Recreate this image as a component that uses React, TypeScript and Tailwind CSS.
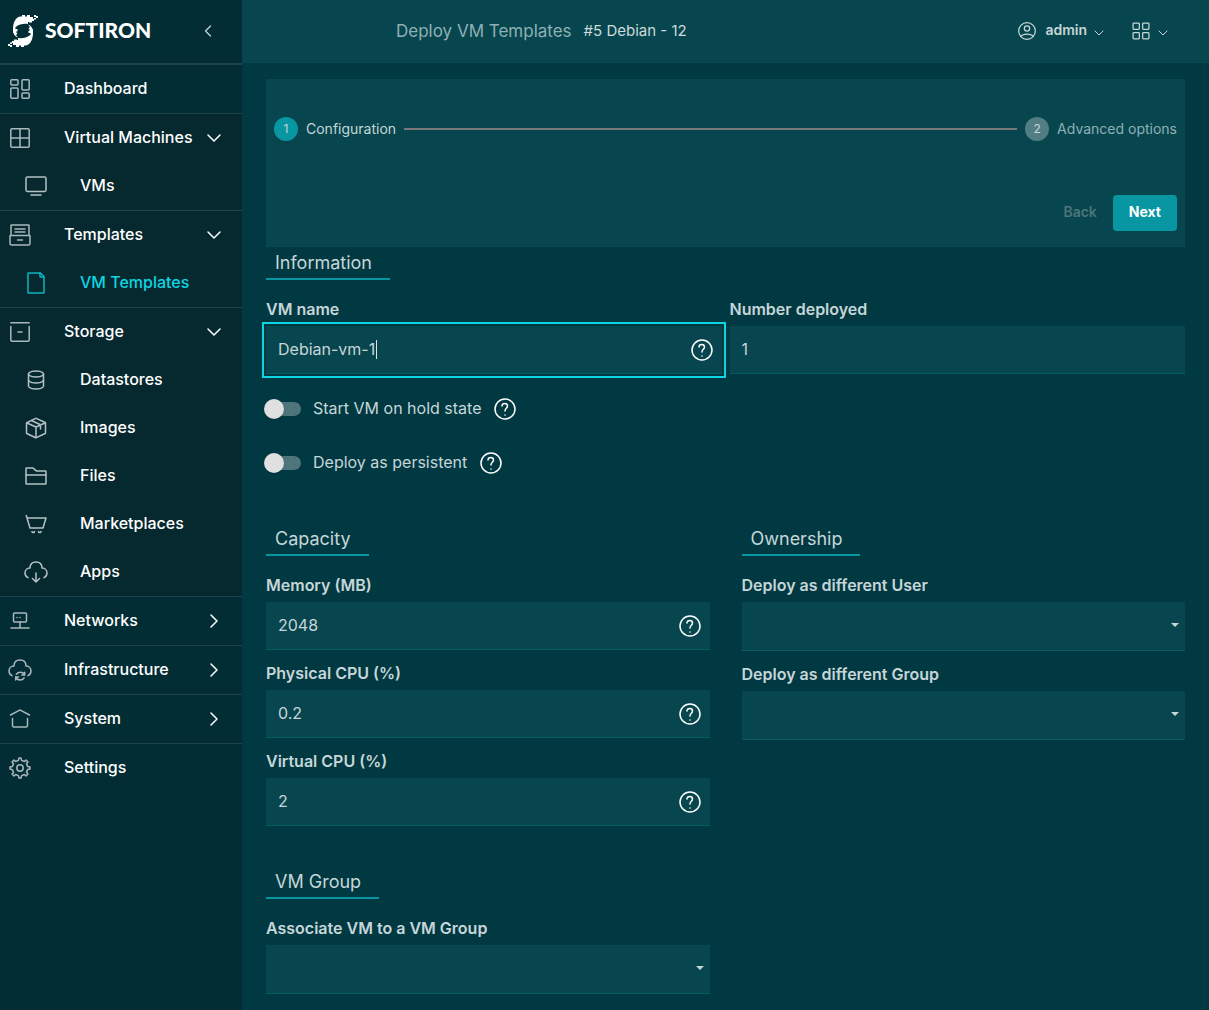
import clsx from "clsx"
import { useState, type ReactNode } from "react"

type IconName = keyof typeof iconPaths

const iconPaths = {
  dashboard: (
    <>
      <rect x="2.8" y="2.8" width="7.2" height="5.2" rx="1" />
      <rect x="2.8" y="11" width="7.2" height="10.2" rx="1" />
      <rect x="14" y="2.8" width="7.2" height="10.2" rx="1" />
      <rect x="14" y="16" width="7.2" height="5.2" rx="1" />
    </>
  ),
  vmGrid: (
    <>
      <rect x="2.8" y="2.8" width="18.4" height="18.4" rx="1" />
      <path d="M12 3V21M3 12H21" />
    </>
  ),
  monitor: (
    <>
      <rect x="2" y="3" width="20" height="14.5" rx="1.4" />
      <path d="M7 21H17" />
    </>
  ),
  archive: (
    <>
      <path d="M7 6H17M7 9H17M9.5 17H14.5" />
      <path d="M3 12.5V2.6C3 2.27 3.27 2 3.6 2H20.4C20.73 2 21 2.27 21 2.6V12.5" />
      <path d="M2.6 12.5H21.4C21.7 12.5 22 12.8 22 13.1V20.4C22 21.3 21.3 22 20.4 22H3.6C2.7 22 2 21.3 2 20.4V13.1C2 12.8 2.3 12.5 2.6 12.5Z" />
    </>
  ),
  page: (
    <>
      <path d="M4 21.4V2.6C4 2.27 4.27 2 4.6 2H16.25C16.4 2 16.56 2.06 16.67 2.18L19.82 5.33C19.94 5.44 20 5.6 20 5.75V21.4C20 21.73 19.73 22 19.4 22H4.6C4.27 22 4 21.73 4 21.4Z" />
      <path d="M16 2V5.4C16 5.73 16.27 6 16.6 6H20" />
    </>
  ),
  box: (
    <>
      <path d="M2.8 6.5V20C2.8 20.7 3.3 21.2 4 21.2H20C20.7 21.2 21.2 20.7 21.2 20V6.5" />
      <path d="M2.8 2.8H21.2M10 12H14" />
    </>
  ),
  database: (
    <>
      <path d="M4.5 6V12C4.5 12 4.5 15 12 15C19.5 15 19.5 12 19.5 12V6" />
      <path d="M12 3C19.5 3 19.5 6 19.5 6C19.5 6 19.5 9 12 9C4.5 9 4.5 6 4.5 6C4.5 6 4.5 3 12 3Z" />
      <path d="M4.5 12V18C4.5 18 4.5 21 12 21C19.5 21 19.5 18 19.5 18V12" />
    </>
  ),
  cube: (
    <>
      <path d="M2.7 6.74C2.57 6.8 2.5 6.93 2.5 7.07V17C2.5 17.2 2.6 17.36 2.8 17.45L11.7 21.7C11.9 21.8 12.1 21.8 12.3 21.7L21.2 17.45C21.4 17.36 21.5 17.2 21.5 17V7C21.5 6.8 21.4 6.6 21.2 6.5L12.3 2.4C12.1 2.3 11.9 2.3 11.7 2.4Z" />
      <path d="M3 7L12 11L21 7M12 11V21.5M7.5 4.5L16.5 8.8V13" />
    </>
  ),
  folder: (
    <>
      <path d="M2 11V4.6C2 4.27 2.27 4 2.6 4H8.78C8.92 4 9.06 4.05 9.17 4.14L12.33 6.86C12.44 6.95 12.58 7 12.72 7H21.4C21.73 7 22 7.27 22 7.6V11" />
      <path d="M2 11H22V19.4C22 19.73 21.73 20 21.4 20H2.6C2.27 20 2 19.73 2 19.4V11Z" />
    </>
  ),
  cart: (
    <>
      <path d="M3 6H22L19 16H6L3 6ZM3 6L2.25 3.5" />
      <path d="M10.5 19.5C10.5 20.1 9.9 20.6 9.3 20.6C8.6 20.6 8 20.1 8 19.5M17 19.5C17 20.1 16.4 20.6 15.8 20.6C15.1 20.6 14.5 20.1 14.5 19.5" />
    </>
  ),
  cloudDown: (
    <>
      <path d="M12 13V22M12 22L15.5 18.5M12 22L8.5 18.5" />
      <path d="M20 17.6C21.5 17 23 15.7 23 13C23 9 19.7 8 18 8C18 6 18 2 12 2C6 2 6 6 6 8C4.3 8 1 9 1 13C1 15.7 2.5 17 4 17.6" />
    </>
  ),
  network: (
    <>
      <rect x="5.5" y="4" width="13" height="9" rx="1" />
      <path d="M3 19H21M12 13V19" />
      <path d="M9 8.5H9.1M12 8.5H12.1" />
    </>
  ),
  cloudSync: (
    <>
      <path d="M20 17.6C21.5 17 23 15.7 23 13C23 9 19.7 8 18 8C18 6 18 2 12 2C6 2 6 6 6 8C4.3 8 1 9 1 13C1 15.7 2.5 17 4 17.6" />
      <path d="M16.5 17C15.9 15.2 14.2 14.2 12.3 14.2C10.6 14.2 9.1 15 8.3 16.3M16.7 14.2V17.1H13.8" />
      <path d="M7.8 18.8C8.3 20.7 10 22 12.1 22C13.8 22 15.3 21.2 16.1 19.8M10.6 19H7.7V21.9" />
    </>
  ),
  home: (
    <>
      <path d="M2.5 8L11.7 3.2C11.9 3.1 12.1 3.1 12.3 3.2L21.5 8" />
      <path d="M19.5 11.5V18.5C19.5 19.6 18.9 20 18 20H6C5.1 20 4.500 19.6 4.500 18.5V11.5" />
    </>
  ),
  cog: (
    <>
      <circle cx="12" cy="12" r="3.2" />
      <path d="M19.62 10.4L18.47 7.62L20 6L18 4L16.39 5.53L13.56 4.37L12.93 2H10.98L10.34 4.4L7.57 5.56L6 4L4 6L5.52 7.64L4.38 10.43L2 11V13L4.4 13.66L5.56 16.43L4 18L6 20L7.65 18.47L10.39 19.6L11 22H13L13.61 19.6L16.37 18.46L18 20L20 18L18.46 16.36L19.6 13.6L22 12.97V11Z" />
    </>
  ),
  user: (
    <>
      <circle cx="12" cy="12" r="10" />
      <circle cx="12" cy="9" r="3.2" />
      <path d="M4.3 18.4C4.3 18.4 6.5 15.6 12 15.6C17.5 15.6 19.7 18.4 19.7 18.4" />
    </>
  ),
  grid: (
    <>
      <rect x="2.5" y="2.5" width="7.5" height="7.5" rx="1" />
      <rect x="14" y="2.5" width="7.5" height="7.5" rx="1" />
      <rect x="2.5" y="14" width="7.5" height="7.5" rx="1" />
      <rect x="14" y="14" width="7.5" height="7.5" rx="1" />
    </>
  ),
  help: (
    <>
      <circle cx="12" cy="12" r="10" />
      <path d="M9 9C9 5.5 14.5 5.5 14.5 9C14.5 11.5 12 11 12 14M12 18.01L12.01 18" />
    </>
  ),
  down: <path d="M6 9L12 15L18 9" />,
  right: <path d="M9 6L15 12L9 18" />,
  left: <path d="M15 6L9 12L15 18" />,
} satisfies Record<string, ReactNode>

function Icon({ name, className = "size-6" }: { name: IconName; className?: string }) {
  return (
    <svg
      viewBox="0 0 24 24"
      fill="none"
      stroke="currentColor"
      strokeWidth="1.5"
      strokeLinecap="round"
      strokeLinejoin="round"
      aria-hidden="true"
      className={clsx("shrink-0", className)}
    >
      {iconPaths[name]}
    </svg>
  )
}

interface NavSection {
  label: string
  icon: IconName
  link?: boolean
  open?: boolean
  children?: { label: string; icon: IconName; active?: boolean }[]
}

const sections: NavSection[] = [
  { label: "Dashboard", icon: "dashboard", link: true },
  {
    label: "Virtual Machines",
    icon: "vmGrid",
    open: true,
    children: [{ label: "VMs", icon: "monitor" }],
  },
  {
    label: "Templates",
    icon: "archive",
    open: true,
    children: [{ label: "VM Templates", icon: "page", active: true }],
  },
  {
    label: "Storage",
    icon: "box",
    open: true,
    children: [
      { label: "Datastores", icon: "database" },
      { label: "Images", icon: "cube" },
      { label: "Files", icon: "folder" },
      { label: "Marketplaces", icon: "cart" },
      { label: "Apps", icon: "cloudDown" },
    ],
  },
  { label: "Networks", icon: "network" },
  { label: "Infrastructure", icon: "cloudSync" },
  { label: "System", icon: "home" },
  { label: "Settings", icon: "cog", link: true },
]

// One half of the mark, the other is the same shape turned by 180 degrees
const logoHalf =
  "M5 13C5.5 6.5 8 2.500 12 1.500H14V0H17V1.500H19V0H22V2H25V4H26V6H24V7.500H21V7H20V9C15 8.500 11 9.500 8.500 11.500C7 12.500 5.500 15 5.500 17L5 18Z" +
  "M26 0H28V2H26ZM28 1H30V3H28ZM26 3H28V4.500H26Z" +
  "M5 15L7 13L8 14H9.500V16L8 17L9.500 18.500L8 20L10 22.500C7 21.500 5 19 5 15Z"

function Logo() {
  return (
    <a href="#" className="flex items-center gap-[7px] text-white">
      <svg viewBox="0 0 30 32" fill="currentColor" aria-hidden="true" className="h-8 w-[30px]">
        <path d={logoHalf} />
        <path d={logoHalf} transform="rotate(180 15 16)" />
      </svg>
      <span className="pb-0.5 font-[Lato] text-[21px] leading-8 font-black">SOFTIRON</span>
    </a>
  )
}

function SidebarSection({ section }: { section: NavSection }) {
  const [open, setOpen] = useState(Boolean(section.open))
  const rowClass = "flex h-12 w-full items-center pr-4 pl-2 text-left font-medium text-white"

  return (
    <li className={clsx("border-t border-[#1d444b]", open && "bg-[#06282f]")}>
      {section.link ? (
        <a href="#" className={rowClass}>
          <Icon name={section.icon} className="mr-8 size-6 text-[#a9b8ba]" />
          <span className="pb-0.5 leading-6">{section.label}</span>
        </a>
      ) : (
        <button
          type="button"
          aria-expanded={open}
          onClick={() => setOpen(!open)}
          className={rowClass}
        >
          <Icon name={section.icon} className="mr-8 size-6 text-[#a9b8ba]" />
          <span className="flex-1 pb-0.5 leading-6 whitespace-nowrap">{section.label}</span>
          <Icon name={open ? "down" : "right"} />
        </button>
      )}
      {open && section.children && (
        <ul>
          {section.children.map((item) => (
            <li key={item.label}>
              <a
                href="#"
                aria-current={item.active ? "page" : undefined}
                className={clsx(
                  "flex h-12 items-center gap-8 pl-6 font-medium",
                  item.active ? "text-[#0fd5e2]" : "text-white"
                )}
              >
                <Icon
                  name={item.icon}
                  className={clsx("size-6", item.active ? "text-[#0bb5c1]" : "text-[#b4c2c4]")}
                />
                <span className="pb-0.5 leading-6">{item.label}</span>
              </a>
            </li>
          ))}
        </ul>
      )}
    </li>
  )
}

function Sidebar() {
  return (
    <aside className="w-[242px] shrink-0 bg-[#022d35]">
      <div className="flex h-16 items-center justify-between border-b border-[#1d444b] pr-6 pb-0.5 pl-2">
        <Logo />
        <button type="button" aria-label="Collapse menu" className="text-[#c6d6d8]">
          <Icon name="left" className="size-5" />
        </button>
      </div>
      <nav aria-label="Main">
        <ul>
          {sections.map((section) => (
            <SidebarSection key={section.label} section={section} />
          ))}
        </ul>
      </nav>
    </aside>
  )
}

function TopBar() {
  return (
    <header className="flex h-[63px] items-center justify-between bg-[#07464e] pr-[38px] pb-0.5 pl-[154px]">
      <h1 className="flex items-center gap-3">
        <span className="text-[17px] leading-6 text-[#8fb0b4]">Deploy VM Templates</span>
        <span className="text-[15px] leading-6 text-[#cbdadb]">#5 Debian - 12</span>
      </h1>
      <div className="flex items-center gap-6 text-[#c6d6d8]">
        <button type="button" className="flex items-center">
          <Icon name="user" className="mr-2 size-5" />
          <span className="pb-0.5 text-sm font-semibold">admin</span>
          <Icon name="down" className="mt-1 ml-1 size-4" />
        </button>
        <button type="button" aria-label="Apps" className="flex items-center gap-1">
          <Icon name="grid" className="size-5" />
          <Icon name="down" className="mt-1 size-4" />
        </button>
      </div>
    </header>
  )
}

function Stepper() {
  return (
    <section aria-label="Steps" className="bg-[#07464e] px-2 pt-[38px] pb-4">
      <ol className="flex items-center gap-2 text-sm leading-6">
        <li aria-current="step" className="flex items-center gap-2 text-[#c6d6d8]">
          <span className="flex size-6 items-center justify-center rounded-full bg-[#0896a3] text-xs">
            1
          </span>
          Configuration
        </li>
        <li aria-hidden="true" className="h-[2px] flex-1 bg-[#787878]" />
        <li className="flex items-center gap-2 text-[#8fb0b4]">
          <span className="flex size-6 items-center justify-center rounded-full bg-[#517d83] text-xs text-[#c6d6d8]">
            2
          </span>
          Advanced options
        </li>
      </ol>
      <div className="mt-[54px] flex justify-end gap-2 text-sm font-semibold">
        <button type="button" disabled className="h-9 px-2 pb-0.5 text-[#4c757b]">
          Back
        </button>
        <button type="button" className="h-9 rounded-sm bg-[#0896a3] px-4 pb-0.5 font-bold text-white">
          Next
        </button>
      </div>
    </section>
  )
}

function SectionTitle({ children }: { children: ReactNode }) {
  return (
    <h2 className="h-[33px] w-fit border-b-2 border-[#0896a3] pr-[18px] pl-[9px] text-lg leading-[31px] text-[#c6d6d8]">
      {children}
    </h2>
  )
}

function HelpButton({ label }: { label: string }) {
  return (
    <button type="button" aria-label={`Help: ${label}`} className="text-white">
      <Icon name="help" />
    </button>
  )
}

function FieldLabel({ id, children }: { id: string; children: ReactNode }) {
  return (
    <label htmlFor={id} className="block h-10 pt-[11px] leading-6 font-semibold text-[#c6d6d8]">
      {children}
    </label>
  )
}

interface TextFieldProps {
  id: string
  label: string
  value: string
  help?: boolean
  focused?: boolean
}

function TextField({ id, label, value, help, focused }: TextFieldProps) {
  return (
    <div className="min-w-0">
      <FieldLabel id={id}>{label}</FieldLabel>
      <div
        className={clsx(
          "relative flex h-12 items-center border-b border-[#085c61] bg-[#07464e] pr-2 pl-3",
          focused && "outline-2 outline-offset-2 outline-[#0fd5e2]"
        )}
      >
        <input
          id={id}
          defaultValue={value}
          className="h-full min-w-0 flex-1 bg-transparent pb-0.5 text-[#c6d6d8] caret-transparent outline-none"
        />
        {focused && <span className="absolute left-[110px] h-[19px] w-px bg-[#dbe6e7]" />}
        {help && <HelpButton label={label} />}
      </div>
    </div>
  )
}

function SelectField({ id, label }: { id: string; label: string }) {
  return (
    <div className="min-w-0">
      <FieldLabel id={id}>{label}</FieldLabel>
      <div className="relative">
        <select
          id={id}
          className="block h-[49px] w-full appearance-none border-b border-[#085c61] bg-[#07464e] px-3 text-[#c6d6d8]"
        >
          <option value=""></option>
        </select>
        <svg
          viewBox="0 0 8 4"
          aria-hidden="true"
          className="pointer-events-none absolute top-[21px] right-[6px] h-1 w-2 fill-[#c6d6d8]"
        >
          <path d="M0 0H8L4 4Z" />
        </svg>
      </div>
    </div>
  )
}

function ToggleField({ id, label }: { id: string; label: string }) {
  return (
    <div className="flex h-[54px] items-center gap-3">
      <label htmlFor={id} className="flex items-center gap-3 pl-px text-[#c6d6d8]">
        <input
          id={id}
          type="checkbox"
          role="switch"
          className="relative h-3.5 w-[34px] appearance-none rounded-full bg-[#4d757b] before:absolute before:-top-[3px] before:-left-[3px] before:size-5 before:rounded-full before:bg-[#e0e0e0] before:shadow before:transition-transform checked:before:translate-x-5"
        />
        <span className="pb-0.5 leading-6">{label}</span>
      </label>
      <HelpButton label={label} />
    </div>
  )
}

export default function App() {
  return (
    <div className="flex min-h-screen bg-[#013942] font-[Inter,sans-serif] text-base">
      <Sidebar />
      <div className="min-w-0 flex-1">
        <TopBar />
        <main className="px-6 py-4">
          <Stepper />
          <form>
            <SectionTitle>Information</SectionTitle>
            <div className="grid grid-cols-2 gap-2 pt-[6px]">
              <TextField id="vm-name" label="VM name" value="Debian-vm-1" help focused />
              <TextField id="vm-count" label="Number deployed" value="1" />
            </div>
            <div className="pt-2 pb-[33px]">
              <ToggleField id="hold" label="Start VM on hold state" />
              <ToggleField id="persistent" label="Deploy as persistent" />
            </div>
            <div className="grid grid-cols-2 gap-8">
              <section>
                <SectionTitle>Capacity</SectionTitle>
                <div className="pt-[6px]">
                  <TextField id="memory" label="Memory (MB)" value="2048" help />
                  <TextField id="cpu" label="Physical CPU (%)" value="0.2" help />
                  <TextField id="vcpu" label="Virtual CPU (%)" value="2" help />
                </div>
              </section>
              <section>
                <SectionTitle>Ownership</SectionTitle>
                <div className="pt-[6px]">
                  <SelectField id="owner-user" label="Deploy as different User" />
                  <SelectField id="owner-group" label="Deploy as different Group" />
                </div>
              </section>
            </div>
            <div className="grid grid-cols-2 gap-8 pt-10">
              <section>
                <SectionTitle>VM Group</SectionTitle>
                <div className="pt-[6px]">
                  <SelectField id="vm-group" label="Associate VM to a VM Group" />
                </div>
              </section>
            </div>
          </form>
        </main>
      </div>
    </div>
  )
}
